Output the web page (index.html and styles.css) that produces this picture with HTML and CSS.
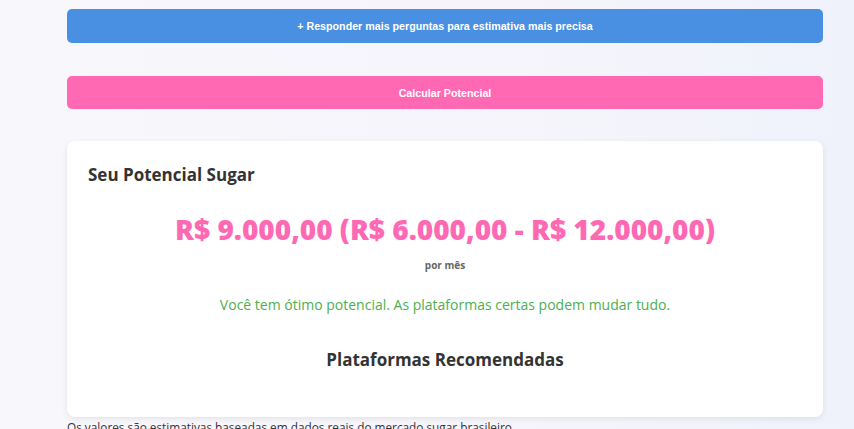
FILE: index.html
```html
<!DOCTYPE html>
<html lang="pt-BR">
<head>
<meta charset="utf-8">
<link rel="stylesheet" href="styles.css">
</head>
<body>
<main class="page">
  <button class="btn btn-blue">+ Responder mais perguntas para estimativa mais precisa</button>
  <button class="btn btn-pink">Calcular Potencial</button>
  <section class="card">
    <h2 class="card-title">Seu Potencial Sugar</h2>
    <div class="amount">R$ 9.000,00 (R$ 6.000,00 - R$ 12.000,00)</div>
    <div class="period">por mês</div>
    <p class="message">Você tem ótimo potencial. As plataformas certas podem mudar tudo.</p>
    <h3 class="platforms">Plataformas Recomendadas</h3>
  </section>
  <p class="note">Os valores são estimativas baseadas em dados reais do mercado sugar brasileiro.</p>
</main>
</body>
</html>
```
FILE: styles.css
```css
html, body {
  margin: 0;
  padding: 0;
  height: 100%;
  overflow: hidden;
}
body {
  background: linear-gradient(90deg, #f8f7fb 0%, #f6f5fb 60%, #eff2fb 100%);
  font-family: "Open Sans", "DejaVu Sans", sans-serif;
  color: #333;
}
.page {
  margin-left: 67px;
  width: 756px;
  padding-top: 9px;
  display: flex;
  flex-direction: column;
}
.btn {
  border: none;
  border-radius: 5px;
  color: #fff;
  font-family: "Liberation Sans", Arial, sans-serif;
  font-weight: bold;
  font-size: 10.7px;
  width: 100%;
  cursor: pointer;
}
.btn-blue {
  background: #4a90e2;
  height: 34px;
}
.btn-pink {
  background: #ff69b4;
  height: 33px;
  margin-top: 33px;
}
.card {
  margin-top: 32px;
  background: #fff;
  border-radius: 8px;
  box-shadow: 0 2px 6px rgba(0,0,0,0.08);
  height: 276px;
  box-sizing: border-box;
  padding: 22px 21px;
  display: flex;
  flex-direction: column;
}
.card-title {
  margin: 0;
  font-size: 17px;
  font-weight: 700;
  color: #333;
  line-height: 24px;
}
.amount {
  margin-top: 22px;
  text-align: center;
  font-size: 28px;
  font-weight: 800;
  color: #ff69b4;
  line-height: 40px;
}
.period {
  margin-top: 9px;
  text-align: center;
  font-size: 10px;
  font-weight: 700;
  color: #666;
}
.message {
  margin: 23px 0 0;
  text-align: center;
  font-size: 14px;
  color: #4caf50;
  line-height: 20px;
}
.platforms {
  margin: 33px 0 0;
  text-align: center;
  font-size: 17px;
  font-weight: 700;
  color: #333;
  line-height: 24px;
}
.note {
  margin: 2px 0 0;
  font-size: 11.8px;
  color: #333;
}
```
